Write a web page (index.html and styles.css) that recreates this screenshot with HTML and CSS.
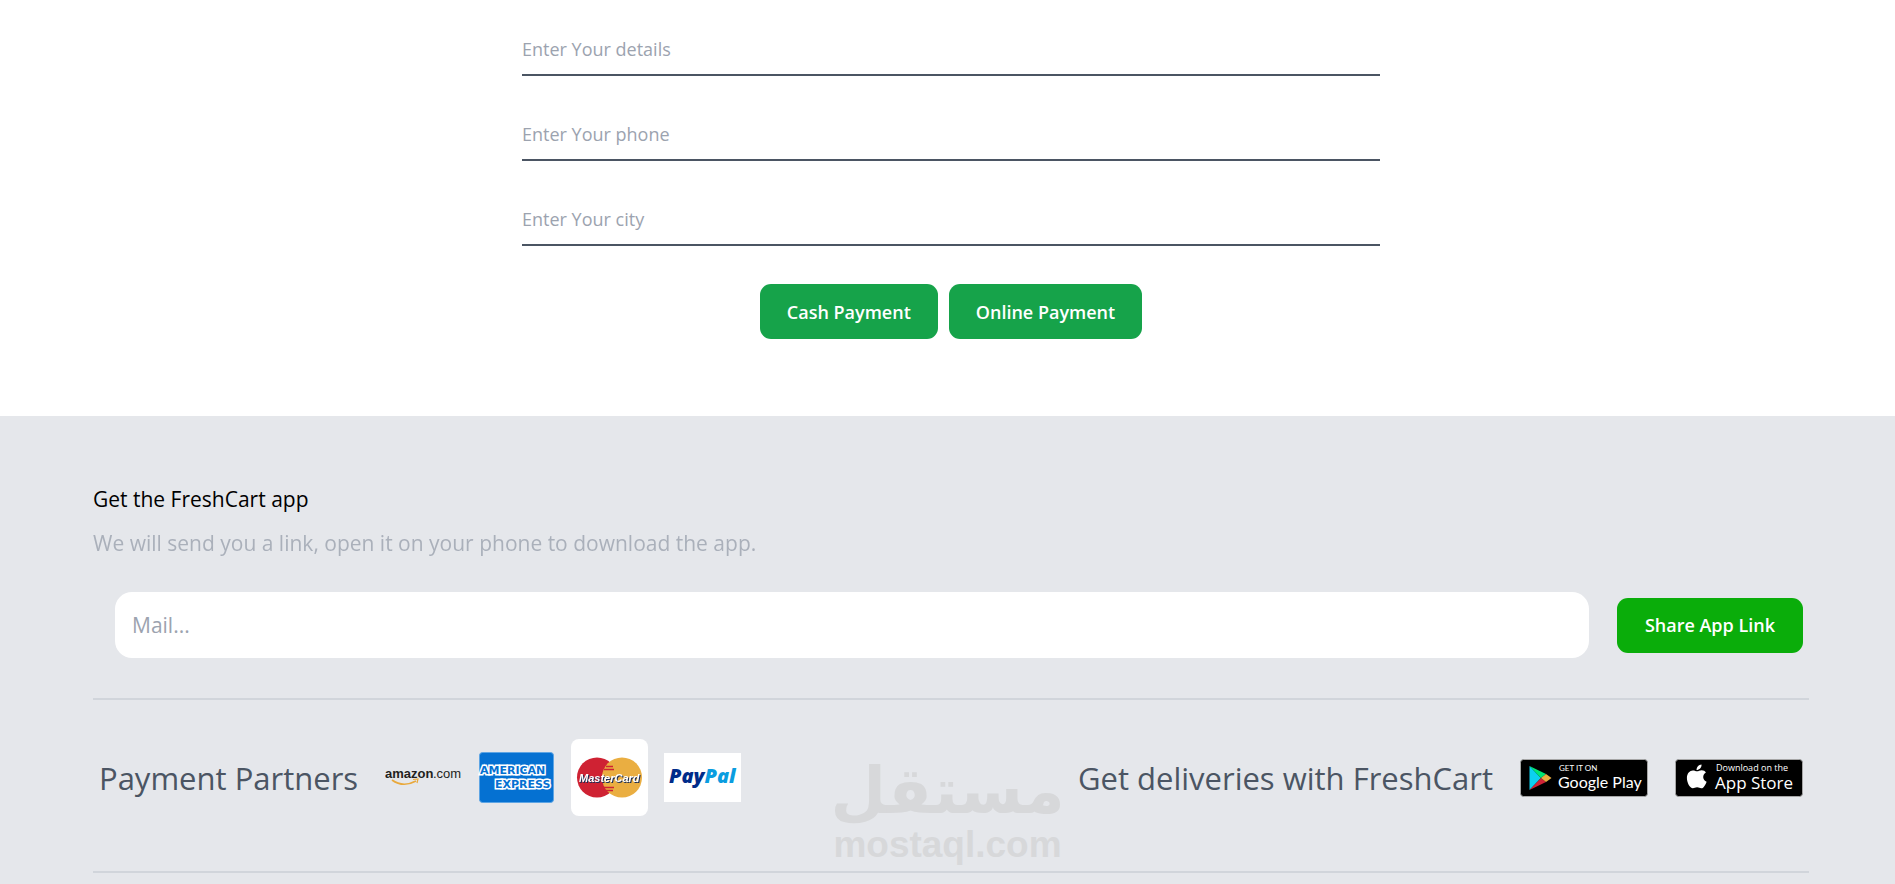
FILE: index.html
```html
<!DOCTYPE html>
<html lang="en">
<head>
  <meta charset="UTF-8">
  <meta name="viewport" content="width=device-width, initial-scale=1.0">
  <title>FreshCart - Checkout</title>
  <link rel="stylesheet" href="styles.css">
</head>
<body>
  <main class="container">
    <form class="checkout-form">
      <input type="text" id="details" name="details" placeholder="Enter Your details" aria-label="Details">
      <input type="tel" id="phone" name="phone" placeholder="Enter Your phone" aria-label="Phone">
      <input type="text" id="city" name="city" placeholder="Enter Your city" aria-label="City">
      <div class="actions">
        <button type="button" class="btn">Cash Payment</button>
        <button type="button" class="btn">Online Payment</button>
      </div>
    </form>
  </main>

  <footer>
    <div class="container">
      <h2>Get the FreshCart app</h2>
      <p class="hint">We will send you a link, open it on your phone to download the app.</p>

      <form class="share-form">
        <input type="email" id="mail" name="mail" placeholder="Mail..." aria-label="Mail">
        <button type="button" class="btn btn-share">Share App Link</button>
      </form>

      <div class="partners">
        <div class="partners-group">
          <h3>Payment Partners</h3>
          <div class="cards">
            <svg class="amazon" width="77" height="24" viewBox="0 0 77 24" role="img" aria-label="Amazon">
              <text x="0" y="12" class="amazon-name">amazon</text>
              <text x="48" y="12" class="amazon-com">.com</text>
              <path d="M7 14 Q18 22 31 15" fill="none" stroke="#e9a93c" stroke-width="1.6"/>
              <path d="M28 13.5 L33 13 L32 17" fill="none" stroke="#e9a93c" stroke-width="1.2"/>
            </svg>
            <svg width="77" height="51" viewBox="0 0 77 51" role="img" aria-label="American Express">
              <rect x="1.5" y="0.5" width="74" height="50" rx="3" fill="#0571d2" stroke="#5ea5e4"/>
              <text x="2" y="22" class="amex-name">AMERICAN</text>
              <text x="17" y="36" class="amex-name">EXPRESS</text>
            </svg>
            <svg width="77" height="77" viewBox="0 0 77 77" role="img" aria-label="MasterCard">
              <rect width="77" height="77" rx="8" fill="#fff"/>
              <circle cx="26" cy="38.5" r="20" fill="#cf2233"/>
              <circle cx="51" cy="38.5" r="20" fill="#eaae41"/>
              <path d="M35 27.500h7M33 30.500h10M33 48.500h10M35 51.500h7" stroke="#cf2233" stroke-width="1.5"/>
              <text x="8" y="43" class="master-name">MasterCard</text>
            </svg>
            <svg width="77" height="49" viewBox="0 0 77 49" role="img" aria-label="PayPal">
              <rect width="77" height="49" fill="#fff"/>
              <text x="5" y="30" class="paypal-name">Pay<tspan fill="#0a9de0">Pal</tspan></text>
            </svg>
          </div>
        </div>

        <div class="partners-group">
          <h3>Get deliveries with FreshCart</h3>
          <div class="stores">
            <a href="#" aria-label="Get it on Google Play">
              <svg width="128" height="38" viewBox="0 0 128 38">
                <rect x="0.5" y="0.5" width="127" height="37" rx="3" fill="#000" stroke="#a6a6a6"/>
                <path d="M9.500 7v24L21 19z" fill="#0cd0f0"/>
                <path d="M9.500 7L21 19l5-4z" fill="#00e676"/>
                <path d="M9.500 31L21 19l5 4z" fill="#cf2336"/>
                <path d="M21 19l5-4 5.500 4-5.500 4z" fill="#eaae41"/>
                <text x="39" y="12" class="store-get">GET IT ON</text>
                <text x="38" y="29" class="store-google">Google Play</text>
              </svg>
            </a>
            <a href="#" aria-label="Download on the App Store">
              <svg width="128" height="38" viewBox="0 0 128 38">
                <rect x="0.5" y="0.5" width="127" height="37" rx="3" fill="#000" stroke="#a6a6a6"/>
                <path d="M21.500 11c0-3 2.200-5.200 5-5.500.3 3-2.200 5.500-5 5.500z" fill="#fff"/>
                <path d="M22 12.300c1.500 0 2.800-1.100 4.700-1.100 1.800 0 3.300.9 4.200 2.200-4 2.400-3.300 7.800.7 9.300-.8 2.200-2.600 6.600-5.300 6.600-1.700 0-2.200-1-4.200-1s-2.600 1-4.200 1c-3 0-6-5.600-6-10.300 0-4.600 2.900-7.500 6-7.500 1.800 0 3 .8 4.100.8z" fill="#fff"/>
                <text x="41" y="12" class="store-download">Download on the</text>
                <text x="40" y="30" class="store-apple">App Store</text>
              </svg>
            </a>
          </div>
        </div>
      </div>
    </div>

    <div class="watermark">
      <span class="watermark-ar" lang="ar" dir="rtl">مستقل</span>
      <span class="watermark-en">mostaql.com</span>
    </div>
  </footer>
</body>
</html>
```
FILE: styles.css
```css
* { box-sizing: border-box; }
body { margin: 0; background: #fff; font-family: "Open Sans", sans-serif; font-size: 18px; }
h2, h3, p { margin: 0; font-weight: normal; }
input { font-family: inherit; outline: none; }
input::placeholder { color: #9ca3af; opacity: 1; }

.container { margin: 0 86px 0 93px; }

/* checkout form */
.checkout-form { width: 50%; margin: 0 auto; padding: 25px 0 77px; }
.checkout-form input { display: block; width: 100%; height: 51px; margin-bottom: 34px; padding: 0 0 1px; border: none; border-bottom: 2px solid #4b5563; background: none; font-size: 18px; }
.actions { display: flex; justify-content: center; gap: 11px; padding-top: 4px; }

.btn { height: 55px; padding: 0 27px; border: none; border-radius: 11px; background: #16a34a; color: #fff; font-family: inherit; font-size: 18px; font-weight: 600; white-space: nowrap; cursor: pointer; }
.btn-share { background: #0aad0a; }

/* footer */
footer { position: relative; min-height: 468px; padding-top: 66px; background: #e5e7eb; overflow: hidden; }
h2 { font-size: 21px; line-height: 34px; }
.hint { margin-top: 10px; color: #9ca3af; font-size: 21px; line-height: 34px; opacity: 0.8; }
.share-form { display: flex; align-items: center; gap: 28px; padding: 32px 6px 40px 22px; }
.share-form input { flex: 1; min-width: 0; height: 66px; padding: 0 17px; border: none; border-radius: 17px; background: #fff; font-size: 21px; }
.share-form .btn { padding: 0 28px; }

.partners { display: flex; align-items: center; justify-content: space-between; height: 175px; padding: 0 6px 16px; border-top: 2px solid #d1d5db; border-bottom: 2px solid #d1d5db; }
.partners-group { display: flex; align-items: center; }
h3 { color: #4b5563; font-size: 31px; line-height: 44px; }
.cards { display: flex; align-items: center; gap: 16px; margin-left: 27px; }
.stores { display: flex; align-items: center; gap: 27px; margin-left: 27px; }
.cards svg, .stores svg, .stores a { display: block; }

.amazon-name { font: bold 13px "Liberation Sans", sans-serif; fill: #231f20; }
.amazon-com { font: 13px "Liberation Sans", sans-serif; fill: #231f20; }
.amex-name { font: bold 11px "DejaVu Sans", sans-serif; fill: #0571d2; stroke: #fff; stroke-width: 3px; paint-order: stroke; }
.master-name { font: italic bold 11px "Liberation Sans", sans-serif; fill: #fff; filter: drop-shadow(1px 1px 0 #1d2f55); }
.paypal-name { font: italic 800 20px "Open Sans", sans-serif; fill: #002c8a; }
.store-get { font: 8px Lato, sans-serif; fill: #fff; }
.store-download { font: 9px "Open Sans", sans-serif; fill: #fff; }
.store-google { font: 16px Lato, sans-serif; fill: #fff; }
.store-apple { font: 17px "Open Sans", sans-serif; fill: #fff; }

/* site watermark, lies over the footer */
.watermark { position: absolute; left: 50%; bottom: 18px; display: flex; flex-direction: column; align-items: center; transform: translateX(-50%); color: #d7d8da; pointer-events: none; }
.watermark-ar { font: bold 64px/64px "DejaVu Sans", sans-serif; }
.watermark-en { font: bold 37px/43px "Liberation Sans", sans-serif; }
```
